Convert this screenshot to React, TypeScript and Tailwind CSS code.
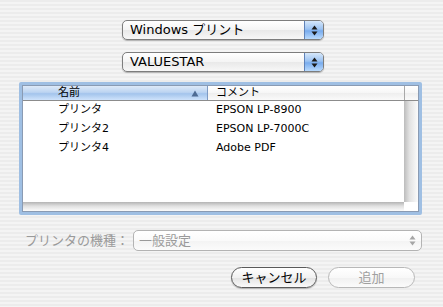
import React from 'react';

const rows = [
  { name: 'プリンタ', comment: 'EPSON LP-8900' },
  { name: 'プリンタ2', comment: 'EPSON LP-7000C' },
  { name: 'プリンタ4', comment: 'Adobe PDF' },
];

function Arrows({ color = '#1a1a1a' }: { color?: string }) {
  return (
    <svg width="7" height="11" viewBox="0 0 7 11">
      <path d="M3.5 0.5 L6.5 4.5 L0.5 4.5 Z" fill={color} />
      <path d="M3.5 10.5 L6.5 6.5 L0.5 6.5 Z" fill={color} />
    </svg>
  );
}

function Popup({ label }: { label: string }) {
  return (
    <div className="ml-[122px] flex h-[20px] w-[202px] rounded-[5px] border border-[#7d7d7d] bg-[linear-gradient(#ffffff,#f4f4f4_50%,#e9e9e9_51%,#f7f7f7)] shadow-[0_1px_1px_rgba(0,0,0,0.25)]">
      <span className="flex-1 pl-[7px] text-[13px] leading-[18px] text-black">{label}</span>
      <span className="flex w-[19px] items-center justify-center rounded-r-[4px] border-l border-[#5f82b8] bg-[linear-gradient(#d6e7fa,#9cc3f2_45%,#79acee_55%,#b9dafd)]">
        <Arrows />
      </span>
    </div>
  );
}

export default function App() {
  return (
    <div className="h-[307px] w-[443px] overflow-hidden bg-[repeating-linear-gradient(180deg,#ececec_0px,#ececec_2px,#f4f4f4_2px,#f4f4f4_4px)] pt-[20px] font-['Lucida_Grande','DejaVu_Sans','Noto_Sans_CJK_JP',sans-serif]">
      <Popup label="Windows プリント" />
      <div className="h-[12px]" />
      <Popup label="VALUESTAR" />

      {/* printer list */}
      <div className="ml-[19px] mt-[10px] h-[133px] w-[403px] rounded-[2px] border-[3px] border-[#9fbfe3] bg-white">
        <div className="flex h-full w-full flex-col border border-[#8a9bb3]">
          <div className="flex h-[15px] border-b border-[#8c8c8c] text-[11px] leading-[14px]">
            <div className="flex w-[185px] items-center border-r border-[#7d9ac4] bg-[linear-gradient(#dde9f8,#bcd4f1_45%,#a3c4ec_55%,#cfe3fb)] pl-[35px] pr-[8px]">
              <span className="flex-1 text-black">名前</span>
              <svg width="8" height="7" viewBox="0 0 8 7">
                <path d="M4 0.5 L7.5 6.5 L0.5 6.5 Z" fill="#4e6b93" />
              </svg>
            </div>
            <div className="w-[197px] border-r border-[#a8a8a8] bg-[linear-gradient(#ffffff,#f6f6f6_50%,#eeeeee_51%,#fafafa)] pl-[8px] text-black">
              コメント
            </div>
            <div className="flex-1 bg-[linear-gradient(#ffffff,#f6f6f6_50%,#eeeeee_51%,#fafafa)]" />
          </div>
          <div className="flex flex-1">
            <div className="flex flex-1 flex-col">
              <div className="flex-1">
                {rows.map((r) => (
                  <div key={r.name} className="flex h-[19px] items-center text-[11px] text-black">
                    <span className="w-[185px] pl-[35px]">{r.name}</span>
                    <span className="pl-[8px]">{r.comment}</span>
                  </div>
                ))}
              </div>
              <div className="h-[9px] bg-[linear-gradient(#b4b4b4,#e0e0e0_45%,#fbfbfb)]" />
            </div>
            <div className="flex w-[14px] flex-col">
              <div className="flex-1 bg-[linear-gradient(90deg,#bcbcbc,#e2e2e2_40%,#fbfbfb)]" />
              <div className="h-[9px] bg-white" />
            </div>
          </div>
        </div>
      </div>

      {/* printer model */}
      <div className="mt-[15px] flex items-center pl-[25px] text-[13px]">
        <span className="w-[108px] text-[#9a9a9a]">プリンタの機種：</span>
        <div className="flex h-[21px] w-[289px] items-center rounded-[5px] border border-[#b3b3b3] bg-[linear-gradient(#ffffff,#fafafa_50%,#f3f3f3_51%,#fbfbfb)]">
          <span className="flex-1 pl-[5px] text-[#9a9a9a]">一般設定</span>
          <span className="flex w-[18px] items-center justify-center">
            <Arrows color="#a6a6a6" />
          </span>
        </div>
      </div>

      {/* buttons */}
      <div className="mt-[16px] flex gap-[11px] pl-[231px] text-[13px]">
        <button className="h-[21px] w-[86px] rounded-full border border-[#5a5a5a] bg-[linear-gradient(#ffffff,#f1f1f1_50%,#e2e2e2_51%,#fafafa)] text-black shadow-[0_1px_1px_rgba(0,0,0,0.25)]">
          キャンセル
        </button>
        <button className="h-[21px] w-[87px] rounded-full border border-[#b8b8b8] bg-[linear-gradient(#ffffff,#f8f8f8_50%,#f0f0f0_51%,#fbfbfb)] text-[#a0a0a0]">
          追加
        </button>
      </div>
    </div>
  );
}
